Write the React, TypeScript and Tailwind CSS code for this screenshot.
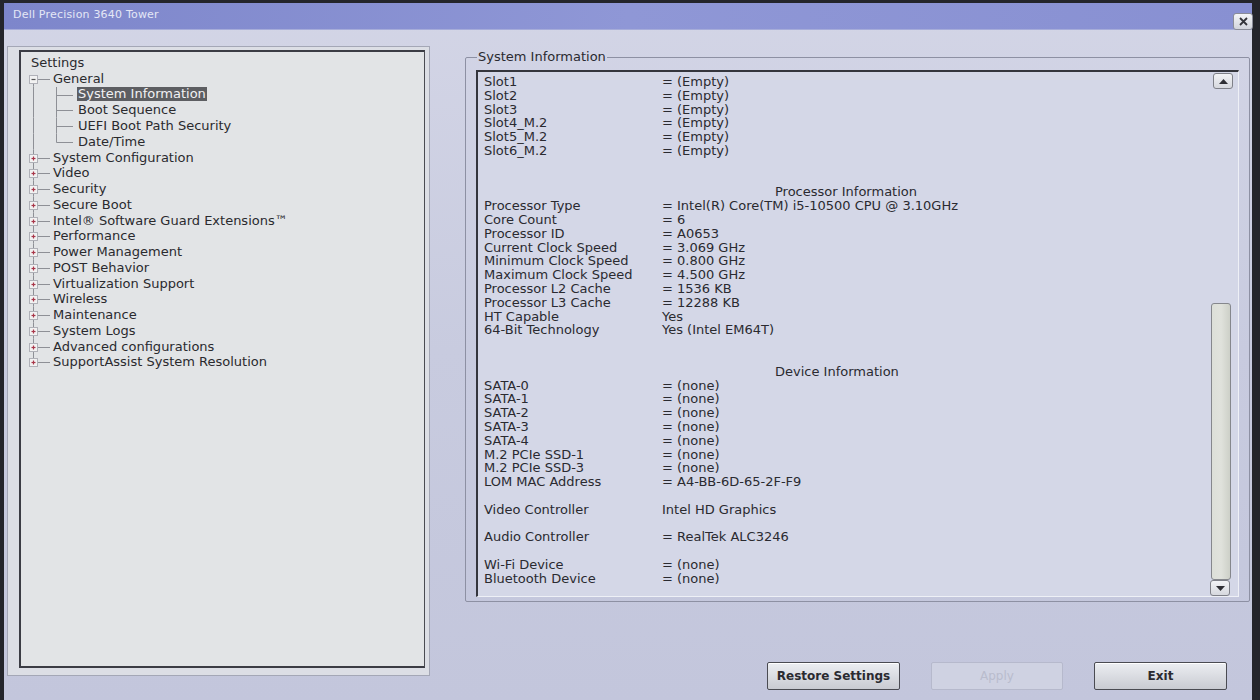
import React from 'react';

type Row = [string, string] | { h: string } | null;

const tree: (string | { label: string; children: string[] })[] = [
  { label: 'General', children: ['System Information', 'Boot Sequence', 'UEFI Boot Path Security', 'Date/Time'] },
  'System Configuration',
  'Video',
  'Security',
  'Secure Boot',
  'Intel® Software Guard Extensions™',
  'Performance',
  'Power Management',
  'POST Behavior',
  'Virtualization Support',
  'Wireless',
  'Maintenance',
  'System Logs',
  'Advanced configurations',
  'SupportAssist System Resolution',
];

const none = '= (none)';
const empty = '= (Empty)';

const info: Row[] = [
  ['Slot1', empty],
  ['Slot2', empty],
  ['Slot3', empty],
  ['Slot4_M.2', empty],
  ['Slot5_M.2', empty],
  ['Slot6_M.2', empty],
  null,
  null,
  { h: 'Processor Information' },
  ['Processor Type', '= Intel(R) Core(TM) i5-10500 CPU @ 3.10GHz'],
  ['Core Count', '= 6'],
  ['Processor ID', '= A0653'],
  ['Current Clock Speed', '= 3.069 GHz'],
  ['Minimum Clock Speed', '= 0.800 GHz'],
  ['Maximum Clock Speed', '= 4.500 GHz'],
  ['Processor L2 Cache', '= 1536 KB'],
  ['Processor L3 Cache', '= 12288 KB'],
  ['HT Capable', 'Yes'],
  ['64-Bit Technology', 'Yes (Intel EM64T)'],
  null,
  null,
  { h: 'Device Information' },
  ['SATA-0', none],
  ['SATA-1', none],
  ['SATA-2', none],
  ['SATA-3', none],
  ['SATA-4', none],
  ['M.2 PCIe SSD-1', none],
  ['M.2 PCIe SSD-3', none],
  ['LOM MAC Address', '= A4-BB-6D-65-2F-F9'],
  null,
  ['Video Controller', 'Intel HD Graphics'],
  null,
  ['Audio Controller', '= RealTek ALC3246'],
  null,
  ['Wi-Fi Device', none],
  ['Bluetooth Device', none],
];

const LINE = '#8e9096';

// connector for a top level node: trunk + expander box + stub
const NodeGutter = ({ open, first, last }: { open?: boolean; first?: boolean; last?: boolean }) => (
  <svg width="32" height="15.75" viewBox="0 0 32 15.75" className="shrink-0">
    {!first && <line x1="12.5" y1="0" x2="12.5" y2="4" stroke={LINE} />}
    {!last && <line x1="12.5" y1="12" x2="12.5" y2="15.75" stroke={LINE} />}
    <line x1="17" y1="8.5" x2="29" y2="8.5" stroke={LINE} />
    <rect x="8.5" y="4.5" width="8" height="8" fill="#f2f2f2" stroke="#b0b1b8" />
    <line x1="10.5" y1="8.5" x2="14.5" y2="8.5" stroke={open ? '#555' : '#a8374a'} strokeWidth="1.2" />
    {!open && <line x1="12.5" y1="6.5" x2="12.5" y2="10.5" stroke="#a8374a" strokeWidth="1.2" />}
  </svg>
);

const LeafGutter = ({ last }: { last?: boolean }) => (
  <svg width="56" height="15.75" viewBox="0 0 56 15.75" className="shrink-0">
    <line x1="12.5" y1="0" x2="12.5" y2="15.75" stroke={LINE} />
    <line x1="35.5" y1="0" x2="35.5" y2={last ? 8.5 : 15.75} stroke={LINE} />
    <line x1="35.5" y1="8.5" x2="52" y2="8.5" stroke={LINE} />
  </svg>
);

const Tree = () => (
  <div className="flex flex-col pt-[3px] text-[13px] leading-[15.75px] text-[#2a2a2e]">
    <div className="pl-[10px] h-[15.75px]">Settings</div>
    {tree.map((n, i) => {
      const last = i === tree.length - 1;
      if (typeof n === 'string') {
        return (
          <div key={n} className="flex items-center h-[15.75px]">
            <NodeGutter last={last} />
            <span className="whitespace-nowrap">{n}</span>
          </div>
        );
      }
      return (
        <React.Fragment key={n.label}>
          <div className="flex items-center h-[15.75px]">
            <NodeGutter open first />
            <span>{n.label}</span>
          </div>
          {n.children.map((c, j) => (
            <div key={c} className="flex items-center h-[15.75px]">
              <LeafGutter last={j === n.children.length - 1} />
              <span
                className={
                  j === 0
                    ? 'bg-[#5d5e62] text-[#f1f1f3] px-[1px] leading-[14px] whitespace-nowrap'
                    : 'px-[1px] whitespace-nowrap'
                }
              >
                {c}
              </span>
            </div>
          ))}
        </React.Fragment>
      );
    })}
  </div>
);

const InfoList = () => (
  <div className="flex flex-col pt-[3px] pl-[6px] text-[13px] leading-[13.8px] text-[#2a2a30]">
    {info.map((r, i) => {
      if (r === null) return <div key={i} className="h-[13.8px]" />;
      if (!Array.isArray(r))
        return (
          <div key={i} className="h-[13.8px] pl-[291px] whitespace-nowrap">
            {r.h}
          </div>
        );
      return (
        <div key={i} className="flex h-[13.8px] whitespace-nowrap">
          <span className="w-[178px] shrink-0">{r[0]}</span>
          <span>{r[1]}</span>
        </div>
      );
    })}
  </div>
);

const ScrollBtn = ({ up }: { up?: boolean }) => (
  <div className="w-[20px] h-[16px] rounded-[3px] border border-[#7e8088] bg-gradient-to-b from-[#f2f3f6] to-[#d6d8de] flex items-center justify-center">
    <svg width="9" height="5" viewBox="0 0 9 5">
      {up ? <path d="M0 5 L4.5 0 L9 5 Z" fill="#2e2e34" /> : <path d="M0 0 L4.5 5 L9 0 Z" fill="#2e2e34" />}
    </svg>
  </div>
);

const Button = ({ label, disabled }: { label: string; disabled?: boolean }) => (
  <div
    className={
      disabled
        ? 'w-[132px] h-[28px] rounded-[2px] border border-[#b6b9cc] bg-[#cfd2e2] text-[#b9bccd] flex items-center justify-center text-[12px]'
        : 'w-[133px] h-[28px] rounded-[2px] border border-[#4a4b52] bg-gradient-to-b from-[#eceef2] to-[#c9cbd2] text-[#2a2a30] flex items-center justify-center text-[12px] font-semibold shadow-[inset_0_1px_0_#ffffff]'
    }
  >
    {label}
  </div>
);

export default function App() {
  return (
    <div
      className="w-[1260px] h-[700px] bg-[#24252b] pt-[3px] pl-[4px] pr-[8px] overflow-hidden"
      style={{ fontFamily: '"DejaVu Sans", Verdana, sans-serif' }}
    >
      <div className="h-full flex flex-col bg-gradient-to-b from-[#d3d5e6] via-[#c8cbdf] to-[#c3c6dc]">
        {/* title bar */}
        <div className="h-[27px] shrink-0 flex items-start justify-between bg-gradient-to-r from-[#7d86cb] via-[#8f97d6] to-[#8890d2] border-b border-[#a6acd9]">
          <span className="pl-[9px] pt-[4px] text-[11px] text-[#e4e7f6] tracking-[0.2px]">Dell Precision 3640 Tower</span>
          <div className="mt-[10px] mr-[-1px] w-[20px] h-[17px] rounded-[3px] border border-[#8a8c98] bg-gradient-to-b from-[#f4f5f8] to-[#d2d4dc] flex items-center justify-center">
            <svg width="9" height="9" viewBox="0 0 9 9">
              <path d="M1 1 L8 8 M8 1 L1 8" stroke="#34343a" strokeWidth="1.8" />
            </svg>
          </div>
        </div>

        <div className="flex pt-[16px] pl-[3px]">
          {/* left tree panel */}
          <div className="w-[423px] h-[630px] shrink-0 bg-[#dcdee5] border border-[#a4a7b6] pl-[11px] pr-[4px] pt-[3px] pb-[7px]">
            <div className="h-full bg-[#e2e4e6] border-t-2 border-l-2 border-r border-b-2 border-t-[#3b3c44] border-l-[#3b3c44] border-r-[#4a4b52] border-b-[#3b3c44]">
              <Tree />
            </div>
          </div>

          {/* right column */}
          <div className="ml-[35px] w-[785px] flex flex-col pt-[4px]">
            <fieldset className="border border-[#8d90a3] rounded-[2px] px-[10px] pt-[6px] pb-[4px]">
              <legend className="ml-[1px] px-[1px] text-[13px] leading-[14px] text-[#2a2a30]">System Information</legend>
              <div className="h-[527px] flex bg-[#d4d7e7] border-t-2 border-l-2 border-b border-r border-t-[#34353d] border-l-[#34353d] border-b-[#eef0f6] border-r-[#eef0f6]">
                <div className="flex-1">
                  <InfoList />
                </div>
                <div className="w-[30px] flex flex-col items-center pt-[1px]">
                  <ScrollBtn up />
                  <div className="flex-1 flex flex-col justify-end pr-[4px]">
                    <div className="w-[20px] h-[277px] rounded-[3px] border border-[#85878c] bg-gradient-to-r from-[#dcdfd8] via-[#e0e2dc] to-[#cdd0c8]" />
                  </div>
                  <div className="mr-[6px]">
                    <ScrollBtn />
                  </div>
                </div>
              </div>
            </fieldset>

            <div className="flex mt-[60px] ml-[302px] gap-[31px]">
              <Button label="Restore Settings" />
              <Button label="Apply" disabled />
              <Button label="Exit" />
            </div>
          </div>
        </div>
      </div>
    </div>
  );
}
